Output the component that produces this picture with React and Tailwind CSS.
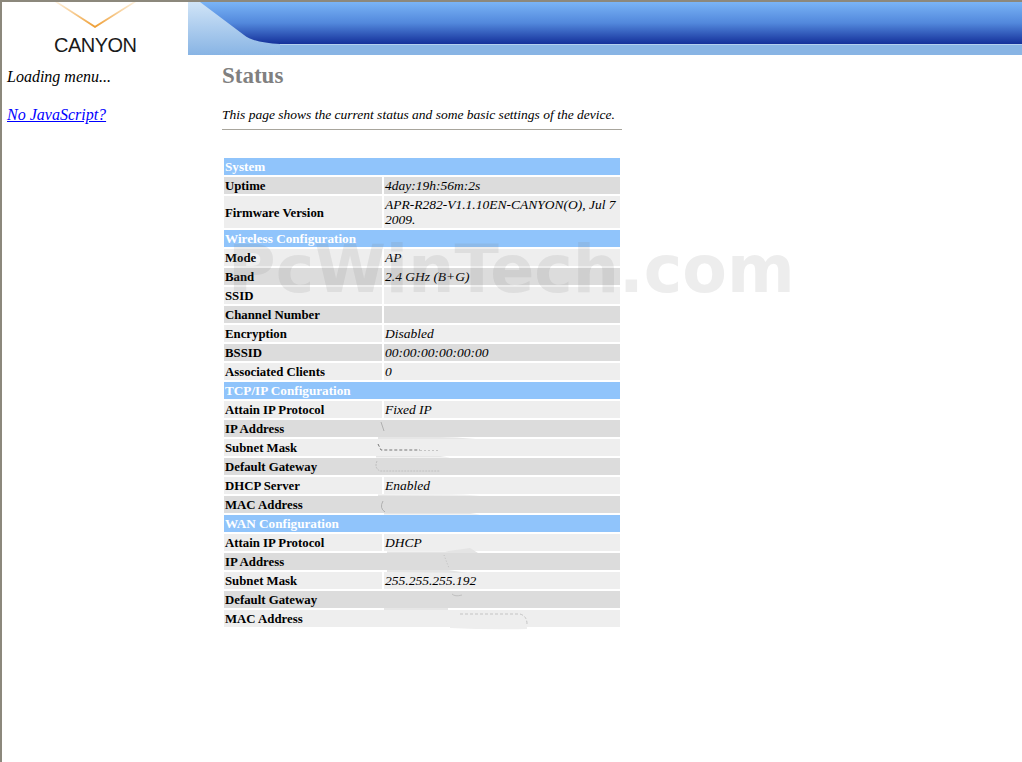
const serif = "font-['Liberation_Serif',serif]"

const sections = [
  { title: 'System', rows: [
    ['Uptime', '4day:19h:56m:2s'],
    ['Firmware Version', 'APR-R282-V1.1.10EN-CANYON(O), Jul 7 2009.'],
  ] },
  { title: 'Wireless Configuration', rows: [
    ['Mode', 'AP'],
    ['Band', '2.4 GHz (B+G)'],
    ['SSID', ''],
    ['Channel Number', ''],
    ['Encryption', 'Disabled'],
    ['BSSID', '00:00:00:00:00:00'],
    ['Associated Clients', '0'],
  ] },
  { title: 'TCP/IP Configuration', rows: [
    ['Attain IP Protocol', 'Fixed IP'],
    ['IP Address', ''],
    ['Subnet Mask', ''],
    ['Default Gateway', ''],
    ['DHCP Server', 'Enabled'],
    ['MAC Address', ''],
  ] },
  { title: 'WAN Configuration', rows: [
    ['Attain IP Protocol', 'DHCP'],
    ['IP Address', ''],
    ['Subnet Mask', '255.255.255.192'],
    ['Default Gateway', ''],
    ['MAC Address', ''],
  ] },
]

function Banner() {
  return (
    <svg className="block h-[53px] flex-1" viewBox="0 0 834 53" preserveAspectRatio="none">
      <defs>
        <linearGradient id="dark" x1="0" y1="0" x2="0" y2="1">
          <stop offset="0" stopColor="#7ab4f6" />
          <stop offset="0.5" stopColor="#5288dc" />
          <stop offset="1" stopColor="#14309a" />
        </linearGradient>
        <linearGradient id="light" x1="0" y1="0" x2="0" y2="1">
          <stop offset="0" stopColor="#d0e4f7" />
          <stop offset="1" stopColor="#88b4e4" />
        </linearGradient>
      </defs>
      <rect width="834" height="53" fill="url(#light)" />
      <path d="M12 0 L56 33 Q66 41 92 42 L834 42 L834 0 Z" fill="url(#dark)" />
      <rect x="92" y="42" width="742" height="2" fill="#b4d0ee" />
      <rect x="92" y="43" width="742" height="10" fill="#88b4e4" />
    </svg>
  )
}

function Logo() {
  return (
    <div className="w-[186px] h-[53px] relative">
      <svg className="absolute left-[50px] top-0" width="90" height="28" viewBox="0 0 90 28">
        <defs>
          <linearGradient id="arm" x1="0" y1="0" x2="0" y2="1">
            <stop offset="0" stopColor="#fdf0dc" />
            <stop offset="1" stopColor="#ee9a2c" />
          </linearGradient>
        </defs>
        <path d="M3 0 L43 26 L84 0 L81 0 L43 23.8 L6 0 Z" fill="url(#arm)" />
      </svg>
      <span className="absolute left-[52px] top-[30px] text-[20px] leading-[26px] tracking-[-0.5px] text-[#1a1a1a] font-['Liberation_Sans',sans-serif]">CANYON</span>
    </div>
  )
}

function Watermark() {
  return (
    <div className="absolute left-[226px] top-[230px] text-[65px] leading-[76px] font-bold text-[#808080]/[0.14] whitespace-nowrap font-['DejaVu_Sans',sans-serif] pointer-events-none">
      PcWinTech.com
    </div>
  )
}

// the hand-painted redactions over the addresses, in page coordinates
function Smudges() {
  const dark = '#dcdcdc'
  const light = '#eeeeee'
  return (
    <svg className="absolute left-0 top-0 pointer-events-none" width="400" height="480" viewBox="222 156 400 480">
      <rect x="382" y="420" width="2" height="17" fill={dark} />
      <rect x="382" y="439" width="2" height="17" fill={light} />
      <rect x="382" y="458" width="2" height="17" fill={dark} />
      <rect x="382" y="496" width="2" height="17" fill={dark} />
      <rect x="382" y="553" width="2" height="17" fill={dark} />
      <rect x="382" y="591" width="2" height="17" fill={dark} />
      <rect x="382" y="610" width="2" height="17" fill={light} />

      <path d="M378 437 H440 Q455 437 476 439 L440 439 H378 Z" fill="#e6e6e6" />
      <path d="M376 456 H440 L450 457.5 H376 Z" fill="#e6e6e6" />
      <path d="M378 494.5 H440 Q460 494 480 495.5 L378 496 Z" fill="#e6e6e6" />
      <path d="M384 513 H470 L480 514.5 H384 Z" fill="#e6e6e6" />
      <path d="M387 551.5 H445 L470 548 L478 553 H387 Z" fill="#e4e4e4" />
      <path d="M387 570 H448 L468 573 L387 572 Z" fill="#e4e4e4" />
      <path d="M384 608 H448 V610 H384 Z" fill="#e6e6e6" />
      <path d="M450 627 H527 V629 Q490 630 450 628 Z" fill={light} />

      <path d="M381 422 L384 431" stroke="#b0b0b0" strokeWidth="1" fill="none" />
      <path d="M378 444 L381 450 H420" stroke="#777777" strokeWidth="1" strokeDasharray="3 2" fill="none" />
      <path d="M420 450.5 H440" stroke="#c4c4c4" strokeWidth="1" strokeDasharray="2 2" fill="none" />
      <path d="M377 461 Q374 468 380 471 H440" stroke="#c0c0c0" strokeWidth="1" strokeDasharray="2 1" fill="none" />
      <path d="M383 501 Q379 508 385 512" stroke="#b0b0b0" strokeWidth="1" fill="none" />
      <path d="M444 555 L449 568" stroke="#c0c0c0" strokeWidth="1" strokeDasharray="1 2" fill="none" />
      <path d="M452 594 Q455 597 462 595" stroke="#c0c0c0" strokeWidth="1" fill="none" />
      <path d="M460 614 H520 Q527 616 527 624" stroke="#c4c4c4" strokeWidth="1" strokeDasharray="3 2" fill="none" />
    </svg>
  )
}

function StatusTable() {
  return (
    <table className="w-[400px] table-fixed border-separate border-spacing-[2px] text-black">
      <colgroup>
        <col className="w-[158px]" />
        <col />
      </colgroup>
      <tbody>
        {sections.map((s) => (
          <Section key={s.title} section={s} />
        ))}
      </tbody>
    </table>
  )
}

function Section({ section }) {
  const first = section.title === 'System'
  return (
    <>
      <tr>
        <td colSpan={2} className="h-[17px] p-0 pl-[1px] bg-[#90c4fb] text-[13.2px] leading-[17px] font-bold text-white">{section.title}</td>
      </tr>
      {section.rows.map(([label, value], i) => {
        const isDark = first ? i % 2 === 0 : i % 2 === 1
        return (
          <tr key={label + i}>
            <td className={`h-[17px] pt-[2px] pb-0 pr-0 pl-[1px] text-[12.8px] leading-[15px] font-bold ${isDark ? 'bg-[#dcdcdc]' : 'bg-[#eeeeee]'}`}>{label}</td>
            <td className={`h-[17px] py-[1px] pr-0 pl-[1px] text-[13.5px] leading-[15px] italic ${isDark ? 'bg-[#dcdcdc]' : 'bg-[#eeeeee]'}`}>{value}</td>
          </tr>
        )
      })}
    </>
  )
}

export default function App() {
  return (
    <div className={`relative h-[762px] w-[1022px] overflow-hidden bg-white border-t-2 border-l-2 border-[#8c887c] ${serif}`}>
      <div className="flex">
        <Logo />
        <Banner />
      </div>
      <div className="flex">
        <aside className="w-[220px] pl-[5px] pt-[12px] text-[16px] leading-[20px] italic text-black">
          <p>Loading menu...</p>
          <p className="mt-[18px]">
            <a href="#" className="text-[#0000ff] underline">No JavaScript?</a>
          </p>
        </aside>
        <main className="w-[400px]">
          <h1 className="mt-[8px] text-[23px] leading-[26px] font-bold text-[#808080]">Status</h1>
          <p className="mt-[18px] text-[13.5px] leading-[15px] italic text-black whitespace-nowrap">
            This page shows the current status and some basic settings of the device.
          </p>
          <hr className="mt-[7px] border-0 h-[1px] bg-[#a8a59c]" />
          <div className="relative mt-[26px]">
            <StatusTable />
            <Smudges />
          </div>
        </main>
      </div>
      <Watermark />
    </div>
  )
}
